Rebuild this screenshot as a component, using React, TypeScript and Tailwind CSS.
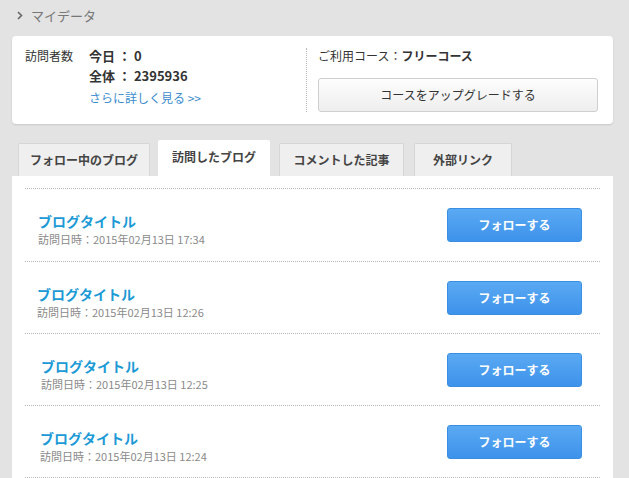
import React from "react";

const rows = [
  { time: "17:34", pl: "pl-[13px]" },
  { time: "12:26", pl: "pl-[12px]" },
  { time: "12:25", pl: "pl-[16px]" },
  { time: "12:24", pl: "pl-[15px]" },
];

export default function App() {
  return (
    <div
      className="w-[629px] h-[478px] overflow-hidden bg-[#e3e3e3] text-[#333]"
      style={{ fontFamily: '"Noto Sans CJK JP", "Noto Sans", sans-serif' }}
    >
      <div className="flex items-center h-[30px] pl-[17px] pt-[1px] gap-[8px] text-[13px] text-[#777]">
        <svg width="6" height="9" viewBox="0 0 6 9">
          <path d="M1 1l3.5 3.5L1 8" stroke="#666" strokeWidth="1.6" fill="none" />
        </svg>
        <span>マイデータ</span>
      </div>

      <div className="ml-[12px] mr-[16px] mt-[6px] h-[88px] rounded-[4px] bg-white shadow-[0_1px_2px_rgba(0,0,0,0.12)] flex">
        <div className="w-[294px] flex pl-[13px] pt-[10px]">
          <div className="w-[64px] text-[12px] leading-[20px]">訪問者数</div>
          <div className="flex flex-col">
            <div className="text-[13px] font-bold leading-[20px]">今日 ： 0</div>
            <div className="text-[13px] font-bold leading-[20px]">全体 ： 2395936</div>
            <div className="text-[12px] leading-[22px] text-[#3b8ccd] mt-[1px]">さらに詳しく見る &gt;&gt;</div>
          </div>
        </div>
        <div className="my-[12px] border-l border-dotted border-[#bbb]" />
        <div className="flex-1 pl-[11px] pr-[15px] pt-[10px]">
          <div className="text-[12px] leading-[20px]">
            ご利用コース：<span className="font-bold">フリーコース</span>
          </div>
          <button className="mt-[12px] w-full h-[34px] rounded-[3px] border border-[#cfcfcf] bg-gradient-to-b from-[#fdfdfd] to-[#eeeeee] text-[12px] text-[#333]">
            コースをアップグレードする
          </button>
        </div>
      </div>

      <div className="flex items-end mt-[16px] pl-[18px] gap-[8px] h-[36px]">
        <div className="w-[132px] h-[33px] flex items-center justify-center border border-b-0 border-[#d6d6d6] rounded-t-[2px] bg-[#efefef] text-[12px] font-bold text-[#444]">
          フォロー中のブログ
        </div>
        <div className="w-[112px] h-[36px] flex items-center justify-center pb-[3px] rounded-t-[2px] bg-white text-[12px] font-bold text-[#444]">
          訪問したブログ
        </div>
        <div className="w-[125px] h-[33px] flex items-center justify-center border border-b-0 border-[#d6d6d6] rounded-t-[2px] bg-[#efefef] text-[12px] font-bold text-[#444] ml-[1px]">
          コメントした記事
        </div>
        <div className="w-[98px] h-[33px] flex items-center justify-center border border-b-0 border-[#d6d6d6] rounded-t-[2px] bg-[#efefef] text-[12px] font-bold text-[#444] ml-[2px]">
          外部リンク
        </div>
      </div>

      <div className="ml-[12px] mr-[16px] bg-white h-[400px] pt-[12px] px-[13px]">
        <div className="border-t border-dotted border-[#bbb]" />
        {rows.map((r, i) => (
          <div
            key={i}
            className={`${i === 0 ? "h-[73px]" : "h-[72px]"} flex items-center border-b border-dotted border-[#bbb]`}
          >
            <div className={`flex-1 ${r.pl} pt-[10px] flex flex-col`}>
              <div className="text-[14px] font-bold leading-[18px] text-[#1c9ad6]">ブログタイトル</div>
              <div className="text-[11px] leading-[18px] text-[#8a8a8a]">訪問日時：2015年02月13日 {r.time}</div>
            </div>
            <button className="mr-[18px] w-[135px] h-[34px] rounded-[3px] bg-gradient-to-b from-[#5aa9f3] to-[#3d92ea] text-white text-[12px] font-bold border border-[#3a8ee4]">
              フォローする
            </button>
          </div>
        ))}
      </div>
    </div>
  );
}
